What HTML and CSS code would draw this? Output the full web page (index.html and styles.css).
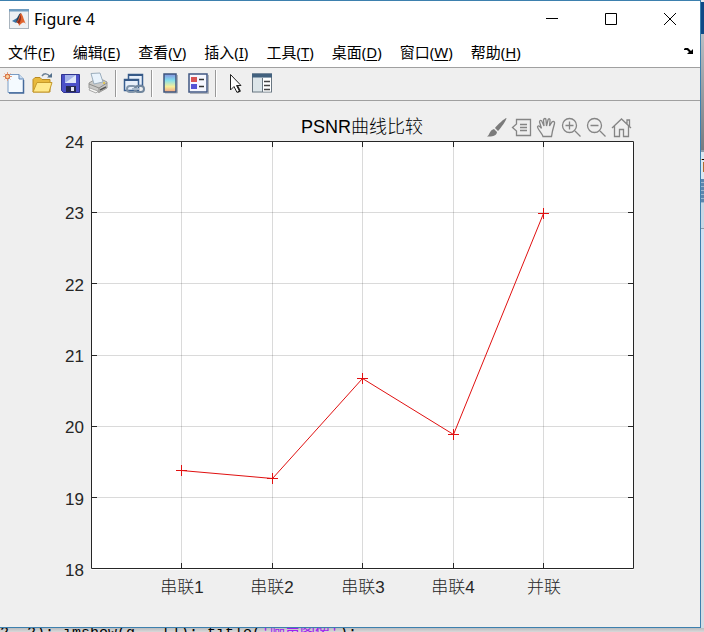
FILE: index.html
```html
<!DOCTYPE html>
<html lang="zh-CN">
<head>
<meta charset="UTF-8">
<meta name="viewport" content="width=device-width, initial-scale=1.0">
<title>Figure 4</title>
<link rel="stylesheet" href="styles.css">
</head>

<body>

<div class="desktop">

    <main class="window">

        <header class="titlebar">
            <svg class="app-icon" width="20" height="20" viewBox="0 0 20 20">
                <rect x=".5" y=".5" width="19" height="19" fill="#eef1f4" stroke="#a9b4be"/>
                <path d="M0 0H20V2.500H0Z" fill="#6f9cc0"/>
                <path d="M3 12L8 9L10 11L7 14Z" fill="#3b76a8"/>
                <path d="M8 9C9 8 10 4 12 4L11 9L9 14L7 13Z" fill="#27435f"/>
                <path d="M12 4C14 6 15 12 17 15C14 12 13 14 10 17C10 14 8 13 7 13C10 12 10 6 12 4Z" fill="#e0652f"/>
                <path d="M12 5C12 9 12 12 10 15L8 13C10 12 11 8 12 5Z" fill="#8c2a1d"/>
            </svg>
            <h1 class="title">Figure 4</h1>
            <div class="controls">
                <button class="control" aria-label="最小化"><svg width="12" height="12" viewBox="0 0 12 12"><path d="M0 5.500H12"/></svg></button>
                <button class="control" aria-label="最大化"><svg width="12" height="12" viewBox="0 0 12 12"><path d="M.5 .5H11.500V11.500H.5Z"/></svg></button>
                <button class="control" aria-label="关闭"><svg width="12" height="12" viewBox="0 0 12 12"><path d="M0 0L12 12M12 0L0 12"/></svg></button>
            </div>
        </header>

        <nav class="menubar">
            <button class="menu">文件(<u>F</u>)</button>
            <button class="menu">编辑(<u>E</u>)</button>
            <button class="menu">查看(<u>V</u>)</button>
            <button class="menu">插入(<u>I</u>)</button>
            <button class="menu">工具(<u>T</u>)</button>
            <button class="menu">桌面(<u>D</u>)</button>
            <button class="menu">窗口(<u>W</u>)</button>
            <button class="menu">帮助(<u>H</u>)</button>
            <button class="dock" aria-label="停靠">
                <svg width="10" height="8" viewBox="0 0 10 8">
                    <path d="M0 2L1 1H4L7 4L9 2V7H3L5 5L3 3H0Z" fill="#000"/>
                </svg>
            </button>
        </nav>

        <div class="toolbar">
            <button class="tool" aria-label="新建图窗">
                <svg viewBox="0 0 24 24">
                    <path d="M6 3.500H17L21.500 8V21.500H6Z" fill="#f4faff" stroke="#7a9cc4"/>
                    <path d="M21.500 9V22H7" fill="none" stroke="#456a9b" stroke-width="1.500"/>
                    <path d="M17 3.500V8H21.500" fill="#c9dcf0" stroke="#6085b5"/>
                    <path d="M5.500 1V10M1 5.500H10M2.500 2.500L8.500 8.500M8.500 2.500L2.500 8.500" stroke="#e5a181"/>
                    <circle cx="5.500" cy="5.500" r="2.200" fill="#fbd09a" stroke="#d16032"/>
                </svg>
            </button>
            <button class="tool" aria-label="打开文件">
                <svg viewBox="0 0 24 24">
                    <path d="M3 8.500L5 6.500H10L12 8.500H20V21H3Z" fill="#e8b93c" stroke="#b98a22"/>
                    <path d="M3 21L7 11.500H22L19 21Z" fill="#ffe98b" stroke="#c69a2a"/>
                    <path d="M12 5C14 2 18 2 20 6" fill="none" stroke="#6c8095" stroke-width="1.500"/>
                    <path d="M17 6.500H22V2Z" fill="#54708c"/>
                </svg>
            </button>
            <button class="tool" aria-label="保存图窗">
                <svg viewBox="0 0 24 24">
                    <path d="M3.500 3.500H21.500V21.500H5.500L3.500 19.500Z" fill="#4b50c8" stroke="#30348f"/>
                    <path d="M7 4H18V12H7Z" fill="#dfe7f8"/>
                    <path d="M7 4H18L7 12Z" fill="#a4b3ea"/>
                    <path d="M8 15H18V21H8Z" fill="#26294f"/>
                    <path d="M13 16H16V20H13Z" fill="#e4e7f2"/>
                </svg>
            </button>
            <button class="tool" aria-label="打印图窗">
                <svg viewBox="0 0 24 24">
                    <path d="M3 12L8 9L10 12L16 10L15 8L21 11V17L13 21.500L3 17Z" fill="#c9c9c7" stroke="#999997"/>
                    <path d="M5 2.500L14 2L17 11L8 13Z" fill="#e9f3fc" stroke="#9caebd"/>
                    <path d="M3 13L13 17L21 12M13 17V21" fill="none" stroke="#8b8b89"/>
                    <path d="M4 17L12 20L10 22L3 19Z" fill="#f7f7f5" stroke="#aaa"/>
                    <path d="M14 19L20 16" stroke="#555" stroke-width="1.500"/>
                    <path d="M17 12H19" stroke="#dcc45b" stroke-width="2"/>
                </svg>
            </button>
            <span class="separator"></span>
            <button class="tool" aria-label="链接绘图">
                <svg viewBox="0 0 24 24">
                    <path d="M6.500 3.500H20.500V14.500H6.500Z" fill="#e7effa" stroke="#395f91" stroke-width="1.500"/>
                    <path d="M6 4H21" stroke="#365987" stroke-width="2"/>
                    <path d="M2.500 8.500H16.500V19.500H2.500Z" fill="#e7effa" stroke="#395f91" stroke-width="1.500"/>
                    <path d="M2 9H17" stroke="#365987" stroke-width="2"/>
                    <rect x="5" y="15" width="9" height="6" rx="3" fill="none" stroke="#8296ab" stroke-width="2"/>
                    <rect x="13" y="15" width="9" height="6" rx="3" fill="none" stroke="#71869d" stroke-width="2"/>
                    <path d="M10 18H17" stroke="#a6b7c9" stroke-width="2"/>
                </svg>
            </button>
            <span class="separator"></span>
            <button class="tool" aria-label="插入颜色栏">
                <svg viewBox="0 0 24 24">
                    <defs>
                        <linearGradient id="colorbar" x2="0" y2="1">
                            <stop offset="0" stop-color="#8491df"/>
                            <stop offset=".35" stop-color="#83dfed"/>
                            <stop offset=".7" stop-color="#f7ef98"/>
                            <stop offset="1" stop-color="#efa184"/>
                        </linearGradient>
                    </defs>
                    <path d="M19.500 4V22H7" fill="none" stroke="#aeb2b8"/>
                    <rect x="6" y="3" width="12" height="18" fill="url(#colorbar)" stroke="#3e567e" stroke-width="1.500"/>
                </svg>
            </button>
            <button class="tool" aria-label="插入图例">
                <svg viewBox="0 0 24 24">
                    <rect x="3" y="3" width="18" height="18" fill="#f5f7ff" stroke="#405783" stroke-width="1.500"/>
                    <path d="M22.500 4V22.500H4" fill="none" stroke="#aeb2b8"/>
                    <path d="M5 6H11V11H5Z" fill="#d85353"/>
                    <path d="M5 13H11V18H5Z" fill="#5454d5"/>
                    <path d="M13 8.500H18M13 15.500H18" stroke="#333" stroke-width="1.500"/>
                </svg>
            </button>
            <span class="separator"></span>
            <button class="tool" aria-label="编辑绘图">
                <svg viewBox="0 0 24 24">
                    <path d="M8.500 3.500V19L12 15.500L15 21.500L17.500 20L14.500 14.500H19Z" fill="#fff" stroke="#222"/>
                    <path d="M16 21L18 20L15.500 15" fill="none" stroke="#222" stroke-width="1.500"/>
                </svg>
            </button>
            <button class="tool" aria-label="打开属性检查器">
                <svg viewBox="0 0 24 24">
                    <rect x="2.500" y="3" width="19" height="18" fill="#dce5e9" stroke="#697681"/>
                    <path d="M2 4.500H22" stroke="#42617e" stroke-width="4"/>
                    <path d="M13 7H21V20.500H13Z" fill="#fff"/>
                    <path d="M12.500 7V21" stroke="#697681"/>
                    <path d="M14 10.500H20M14 14.500H20M14 18.500H20" stroke="#444" stroke-width="1.500"/>
                </svg>
            </button>
        </div>

        <section class="figure">
            <svg class="chart" viewBox="0 0 700 526" role="img" aria-label="PSNR曲线比较">
                <rect class="plot" x="91" y="40" width="543" height="429"/>
                <g class="grid">
                    <path d="M181.500 40V468M272.500 40V468M362.500 40V468M453.500 40V468M543.500 40V468"/>
                    <path d="M91 396.500H634M91 325.500H634M91 254.500H634M91 182.500H634M91 111.500H634"/>
                </g>
                <g class="axis">
                    <path d="M91.500 40.500H633.500V467.500H91.500Z"/>
                    <path d="M181.500 40V46M272.500 40V46M362.500 40V46M453.500 40V46M543.500 40V46"/>
                    <path d="M181.500 462V468M272.500 462V468M362.500 462V468M453.500 462V468M543.500 462V468"/>
                    <path d="M91 396.500H97M91 325.500H97M91 254.500H97M91 182.500H97M91 111.500H97"/>
                    <path d="M628 396.500H634M628 325.500H634M628 254.500H634M628 182.500H634M628 111.500H634"/>
                </g>
                <g class="series">
                    <polyline points="181.500,369.500 272.500,377.500 362.500,277.500 453.500,333.500 543.500,112.500"/>
                    <path d="M176 369.500H187M181.500 364V375M267 377.500H278M272.500 372V383M357 277.500H368M362.500 272V283M448 333.500H459M453.500 328V339M538 112.500H549M543.500 107V118"/>
                </g>
                <text class="chart-title" x="362" y="32">PSNR曲线比较</text>
                <g class="y-labels">
                    <text x="84" y="47">24</text>
                    <text x="84" y="118">23</text>
                    <text x="84" y="190">22</text>
                    <text x="84" y="261">21</text>
                    <text x="84" y="332">20</text>
                    <text x="84" y="404">19</text>
                    <text x="84" y="475">18</text>
                </g>
                <g class="x-labels">
                    <text x="182" y="492">串联1</text>
                    <text x="272" y="492">串联2</text>
                    <text x="363" y="492">串联3</text>
                    <text x="453" y="492">串联4</text>
                    <text x="544" y="492">并联</text>
                </g>
            </svg>

            <div class="axes-toolbar">
                <button class="axes-tool" aria-label="刷亮">
                    <svg viewBox="0 0 25 25">
                        <path class="solid" d="M22.500 3C21 3 13 10 11 13L14 16C17 13 22.500 5 22.500 3ZM10 14L13 17C12.500 21 8 22 3 21.500C6 20 5 15.500 10 14Z"/>
                    </svg>
                </button>
                <button class="axes-tool" aria-label="数据提示">
                    <svg viewBox="0 0 25 25">
                        <path d="M7.500 4.500H21.500V20.500H7.500V16L3.500 12.500L7.500 9ZM11 9.500H18M11 12.500H18M11 15.500H18"/>
                    </svg>
                </button>
                <button class="axes-tool" aria-label="平移">
                    <svg viewBox="0 0 25 25">
                        <path d="M9 21.500C8 18 4 15 3.500 12C4 10 6 11 7.500 13.500L5.500 7C5.500 5 7.500 5 8 6.500L10 11L9.500 5C10 3 12 3 12 5L12.500 11L14 5C14.500 3 16.500 3.500 16 6L15.500 11L18 7C19.500 5.500 21 7 20.500 8.500L18.500 16L17.500 21.500Z"/>
                    </svg>
                </button>
                <button class="axes-tool" aria-label="放大">
                    <svg viewBox="0 0 25 25">
                        <circle cx="10.500" cy="10.500" r="7"/>
                        <path d="M6.500 10.500H14.500M10.500 6.500V14.500M16 16L21.500 21.500"/>
                    </svg>
                </button>
                <button class="axes-tool" aria-label="缩小">
                    <svg viewBox="0 0 25 25">
                        <circle cx="10.500" cy="10.500" r="7"/>
                        <path d="M6.500 10.500H14.500M16 16L21.500 21.500"/>
                    </svg>
                </button>
                <button class="axes-tool" aria-label="还原视图">
                    <svg viewBox="0 0 25 25">
                        <path d="M3 13L12.500 4L22 13M18 9V5H20.500V11M5.500 11V21.500H10.500V14.500H14.500V21.500H19.500V11"/>
                    </svg>
                </button>
            </div>
        </section>

    </main>

    <div class="side-strip">
        <div class="side-head"></div>
        <div class="side-panel"></div>
        <div class="side-label">首</div>
        <div class="side-tabs"></div>
        <div class="side-row"></div>
        <div class="side-rest"></div>
    </div>

    <div class="editor-strip">
        <code>2, 2); imshow(g,  []); title(<span class="string">'噪声图像'</span>);</code>
    </div>

</div>

</body>
</html>
```

FILE: styles.css
```css
*{
    box-sizing:border-box;
}

body{
    margin:0;
    background:#dcdcdc;
    color:#000;
    font-family:"Noto Sans", "Noto Sans CJK SC", sans-serif;
}

button{
    margin:0;
    padding:0;
    border:none;
    background:none;
    color:inherit;
    font:inherit;
}

svg{
    display:block;
}

.desktop{
    display:grid;
    grid-template-columns:minmax(0, 1fr) 3px;
}

.window{
    border:1px solid #3d80ae;
    border-left:none;
    background:#fff;
}

/* title bar */
.titlebar{
    display:flex;
    align-items:center;
    height:36px;
    padding-left:9px;
}

.title{
    margin:0 0 0 5px;
    font-size:16px;
    font-weight:normal;
}

.controls{
    display:flex;
    align-self:stretch;
    gap:1px;
    margin-left:auto;
    padding-right:1px;
}

.control{
    display:flex;
    align-items:center;
    justify-content:center;
    width:58px;
}

.control svg{
    fill:none;
    stroke:#000;
}

/* menus */
.menubar{
    display:flex;
    align-items:center;
    gap:18px;
    height:30px;
    padding:0 6px 2px 8px;
    font-size:15px;
}

.menu{
    white-space:nowrap;
}

.menu u{
    text-underline-offset:2px;
}

.dock{
    margin-left:auto;
}

/* toolbar */
.toolbar{
    display:flex;
    align-items:center;
    gap:4px;
    height:34px;
    padding:0 2px 2px;
    border-top:1px solid #a0a0a0;
    border-bottom:1px solid #a0a0a0;
    background:#efefef;
}

.tool{
    width:24px;
    height:24px;
}

.separator{
    width:2px;
    height:27px;
    margin:0 1px;
    border-left:1px solid #999;
    border-right:1px solid #fff;
}

/* figure */
.figure{
    position:relative;
    background:#efefef;
}

.chart{
    width:100%;
    height:auto;
    font-family:"Liberation Sans", "Noto Sans CJK SC", sans-serif;
    font-size:17px;
    font-weight:300;
}

.plot{
    fill:#fff;
}

.grid{
    fill:none;
    stroke:#262626;
    stroke-opacity:0.17;
}

.axis{
    fill:none;
    stroke:#262626;
}

.series{
    fill:none;
    stroke:#e01010;
}

.chart-title{
    font-size:18px;
    text-anchor:middle;
}

.y-labels{
    fill:#262626;
    text-anchor:end;
}

.x-labels{
    fill:#262626;
    text-anchor:middle;
}

.axes-toolbar{
    position:absolute;
    top:14px;
    right:66px;
    display:flex;
}

.axes-tool{
    width:25px;
    height:25px;
}

.axes-tool svg{
    fill:none;
    stroke:#858585;
    stroke-width:1.3;
}

.axes-tool .solid{
    fill:#7b7b7b;
    stroke:none;
}

/* what shows behind the window */
.side-strip{
    display:flex;
    flex-direction:column;
    overflow:hidden;
}

.side-head{
    height:34px;
    border-top:2px solid #e4e9ee;
    background:#0f4a87;
}

.side-panel{
    height:116px;
    background:linear-gradient(#b9bec4, #777b80);
}

.side-label{
    height:29px;
    border-top:2px solid #8f9ba8;
    background:#dde8f2;
    font-size:15px;
    line-height:24px;
}

.side-tabs{
    height:24px;
    background:repeating-linear-gradient(#5d86ae 0 3px, #9db8d0 3px 4px);
}

.side-row{
    height:26px;
    border-bottom:1px solid #8c9aa8;
    background:#c9d7e5;
}

.side-rest{
    flex:1;
    background:linear-gradient(#cfe0f2, #d4dbe3);
}

.editor-strip{
    grid-column:1 / -1;
    height:4px;
    overflow:hidden;
    background:linear-gradient(#b9bcbf, #d9d9d9);
}

.editor-strip code{
    display:block;
    font-family:"Liberation Mono", "Noto Sans CJK SC", monospace;
    font-size:15px;
    line-height:12px;
    white-space:pre;
}

.string{
    color:#a020f0;
}
```
